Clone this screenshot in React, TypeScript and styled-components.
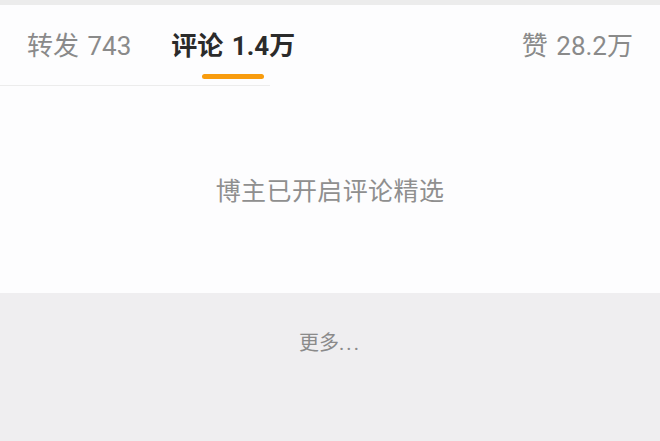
import React from 'react'
import styled, { createGlobalStyle } from 'styled-components'

const GlobalStyle = createGlobalStyle`
  html, body {
    margin: 0;
    padding: 0;
    background: #fdfdfe;
    font-family: Roboto, "Noto Sans CJK SC", sans-serif;
  }
`

const Page = styled.div`
  display: flex;
  flex-direction: column;
  width: 660px;
  height: 441px;
  overflow: hidden;
`

const TopStrip = styled.div`
  height: 5px;
  background: #ececec;
`

const TabBar = styled.div`
  display: flex;
  justify-content: space-between;
  align-items: stretch;
  height: 80px;
  padding: 0 27px;
  background: #fdfdfe;
`

const TabGroup = styled.div`
  display: flex;
  gap: 40px;
`

const Tab = styled.div<{ active?: boolean }>`
  position: relative;
  display: flex;
  align-items: center;
  padding-bottom: 3px;
  font-size: 26px;
  word-spacing: 2px;
  font-weight: ${({ active }) => (active ? 700 : 400)};
  color: ${({ active }) => (active ? '#2b2b2b' : '#8a8a8a')};
  white-space: pre;

  &::after {
    content: '';
    display: ${({ active }) => (active ? 'block' : 'none')};
    position: absolute;
    left: 50%;
    bottom: 6px;
    width: 62px;
    height: 5px;
    margin-left: -31px;
    border-radius: 3px;
    background: #f89c0e;
  }
`

const Divider = styled.div`
  width: 270px;
  height: 1px;
  background: #ececec;
`

const Content = styled.div`
  display: flex;
  align-items: center;
  justify-content: center;
  height: 207px;
  background: #fdfdfe;
`

const Notice = styled.div`
  font-size: 25px;
  letter-spacing: 0.4px;
  color: #8f8f8f;
  padding-bottom: 1px;
`

const Footer = styled.div`
  flex: 1;
  display: flex;
  justify-content: center;
  padding-top: 34px;
  background: #efeef0;
`

const More = styled.div`
  font-size: 20px;
  color: #8a8a8a;
`

const Dots = styled.span`
  letter-spacing: 2px;
`

export default function App() {
  return (
    <Page>
      <GlobalStyle />
      <TopStrip />
      <TabBar>
        <TabGroup>
          <Tab>转发 743</Tab>
          <Tab active>评论 1.4万</Tab>
        </TabGroup>
        <Tab>赞 28.2万</Tab>
      </TabBar>
      <Divider />
      <Content>
        <Notice>博主已开启评论精选</Notice>
      </Content>
      <Footer>
        <More>
          更多<Dots>...</Dots>
        </More>
      </Footer>
    </Page>
  )
}
